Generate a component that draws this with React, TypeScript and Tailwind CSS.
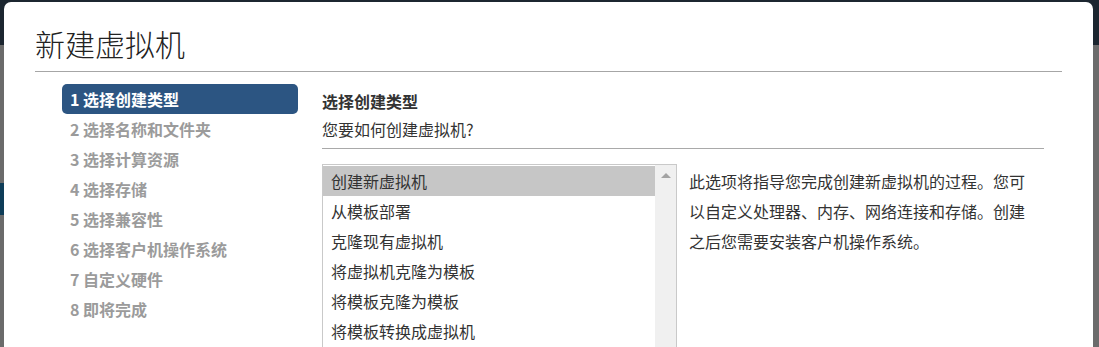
const STEPS = [
  "1 选择创建类型",
  "2 选择名称和文件夹",
  "3 选择计算资源",
  "4 选择存储",
  "5 选择兼容性",
  "6 选择客户机操作系统",
  "7 自定义硬件",
  "8 即将完成",
];

const TYPES = [
  "创建新虚拟机",
  "从模板部署",
  "克隆现有虚拟机",
  "将虚拟机克隆为模板",
  "将模板克隆为模板",
  "将模板转换成虚拟机",
];

const FONT = "font-['Noto_Sans_CJK_SC','Microsoft_YaHei',sans-serif]";

export default function App() {
  return (
    <div className={`relative w-[1099px] h-[347px] overflow-hidden bg-[#6b6b6b] ${FONT}`}>
      {/* page behind the modal */}
      <div className="h-[45px] bg-[#1c2630]" />
      <div className="mt-[138px] h-[32px] w-[4px] bg-[#0e3d58]" />

      {/* modal */}
      <div className="absolute left-[4px] top-[2px] w-[1089px] h-[360px] bg-white rounded-t-[7px] px-[31px]">
        <div className="pt-[22px] pb-[9px] text-[30px] leading-[38px] font-light text-[#222]">新建虚拟机</div>
        <div className="h-px bg-[#a6a6a6]" />

        <div className="flex pt-[12px] pl-[27px] pr-[18px]">
          {/* wizard steps */}
          <div className="w-[236px] shrink-0 flex flex-col">
            {STEPS.map((s, i) => (
              <div
                key={s}
                className={
                  i === 0
                    ? "h-[30px] leading-[30px] px-[8px] rounded-[5px] bg-[#2c5582] text-white font-bold text-[16px]"
                    : "h-[30px] leading-[30px] px-[8px] text-[#9b9b9b] font-bold text-[16px]"
                }
              >
                {s}
              </div>
            ))}
          </div>

          {/* page content */}
          <div className="ml-[24px] flex-1 flex flex-col">
            <div className="pt-[3px] text-[16px] leading-[28px] font-bold text-[#333]">选择创建类型</div>
            <div className="text-[16px] leading-[28px] text-[#333]">您要如何创建虚拟机?</div>
            <div className="mt-[5px] h-px bg-[#a9a9a9]" />

            <div className="mt-[15px] flex">
              <div className="w-[355px] h-[200px] shrink-0 border border-[#c9c9c9] flex">
                <div className="flex-1 pt-px">
                  {TYPES.map((t, i) => (
                    <div
                      key={t}
                      className={
                        i === 0
                          ? "h-[30px] leading-[30px] px-[8px] text-[16px] text-[#333] bg-[#c6c6c6]"
                          : "h-[30px] leading-[30px] px-[8px] text-[16px] text-[#333]"
                      }
                    >
                      {t}
                    </div>
                  ))}
                </div>
                <div className="w-[21px] bg-[#f0f0f0] flex justify-center pt-[8px]">
                  <div className="w-0 h-0 border-l-[5px] border-r-[5px] border-b-[5px] border-l-transparent border-r-transparent border-b-[#a3a3a3]" />
                </div>
              </div>

              <div className="ml-[12px] w-[340px] pt-[2px] text-[16px] leading-[30px] text-[#333]">
                此选项将指导您完成创建新虚拟机的过程。您可以自定义处理器、内存、网络连接和存储。创建之后您需要安装客户机操作系统。
              </div>
            </div>
          </div>
        </div>
      </div>
    </div>
  );
}
